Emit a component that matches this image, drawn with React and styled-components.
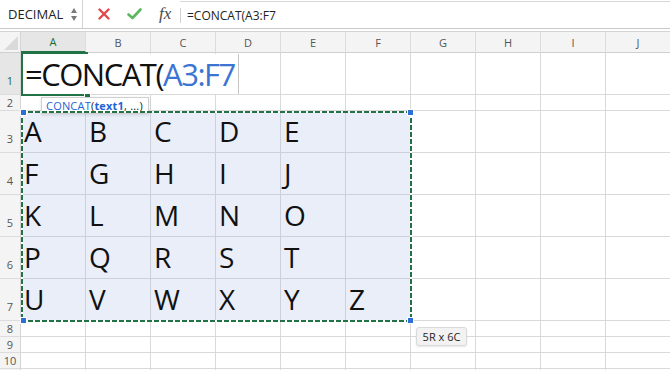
import React from "react";
import styled, { createGlobalStyle } from "styled-components";

const GlobalStyle = createGlobalStyle`
  html, body {
    margin: 0;
    padding: 0;
    background: #fff;
    overflow: hidden;
  }
  body {
    font-family: "Open Sans", "Noto Sans", sans-serif;
    color: #1d1d1d;
  }
`;

const COLS = ["A", "B", "C", "D", "E", "F", "G", "H", "I", "J"];
const ROWS = [
  { n: 1, h: 42 },
  { n: 2, h: 16 },
  { n: 3, h: 42 },
  { n: 4, h: 42 },
  { n: 5, h: 42 },
  { n: 6, h: 42 },
  { n: 7, h: 42 },
  { n: 8, h: 16 },
  { n: 9, h: 16 },
  { n: 10, h: 16 },
  { n: 11, h: 16, hidden: true },
];
const DATA = [
  ["A", "B", "C", "D", "E", ""],
  ["F", "G", "H", "I", "J", ""],
  ["K", "L", "M", "N", "O", ""],
  ["P", "Q", "R", "S", "T", ""],
  ["U", "V", "W", "X", "Y", "Z"],
];

const Page = styled.div`
  width: 670px;
  height: 370px;
  overflow: hidden;
`;

const FormulaBar = styled.div`
  display: flex;
  align-items: stretch;
  height: 28px;
  border-bottom: 1px solid #c9c9c9;
  box-shadow: 0 2px 0 #fff, 0 3px 0 #d4d4d4;
  margin-bottom: 3px;
`;

const NameBox = styled.div`
  width: 83px;
  display: flex;
  align-items: center;
  justify-content: space-between;
  padding: 0 5px 0 8px;
  box-sizing: border-box;
  border-right: 1px solid #d2d2d2;
  font-size: 13px;
  color: #222;
`;

const Spinner = styled.div`
  display: flex;
  flex-direction: column;
  gap: 3px;
  margin-top: 1px;
`;

const Arrow = styled.div`
  width: 0;
  height: 0;
  border-left: 3.5px solid transparent;
  border-right: 3.5px solid transparent;
  ${({ up }) =>
    up ? `border-bottom: 5px solid #7a7a7a;` : `border-top: 5px solid #7a7a7a;`}
`;

const Actions = styled.div`
  display: flex;
  align-items: center;
  width: 97px;
  padding-left: 15px;
  box-sizing: border-box;
  gap: 17px;
`;

const FxLabel = styled.span`
  font-family: "Liberation Serif", "DejaVu Serif", serif;
  font-style: italic;
  font-size: 17px;
  color: #4a4a4a;
`;

const FormulaInput = styled.div`
  flex: 1;
  display: flex;
  align-items: center;
  border-top: 1px solid #d6d6d6;
  margin-top: 1px;
  font-size: 12px;
  color: #222;
  &::before {
    content: "";
    width: 1px;
    height: 15px;
    background: #d0d0d0;
    margin-right: 6px;
  }
`;

const Sheet = styled.div`
  position: relative;
  display: grid;
  grid-template-columns: 21px repeat(10, 65px);
`;

const Corner = styled.div`
  height: 21px;
  box-sizing: border-box;
  background: #f4f4f4;
  border-right: 1px solid #d4d4d4;
  border-bottom: 1px solid #cfcfcf;
  position: relative;
  &::after {
    content: "";
    position: absolute;
    right: 2px;
    bottom: 2px;
    border-left: 14px solid transparent;
    border-bottom: 14px solid #dadada;
  }
`;

const ColHead = styled.div`
  height: 21px;
  box-sizing: border-box;
  display: flex;
  align-items: center;
  justify-content: center;
  font-size: 11px;
  background: ${({ active }) => (active ? "#e6e6e6" : "#f4f4f4")};
  color: ${({ active }) => (active ? "#1e6b3b" : "#555")};
  border-right: 1px solid #dcdcdc;
  border-bottom: ${({ active }) =>
    active ? "2px solid #217346" : "1px solid #cfcfcf"};
`;

const RowHead = styled.div`
  height: ${({ h }) => h}px;
  box-sizing: border-box;
  display: flex;
  align-items: flex-end;
  justify-content: center;
  padding-bottom: ${({ h }) => (h > 20 ? 7 : 1)}px;
  font-size: 11px;
  line-height: 13px;
  background: ${({ active }) => (active ? "#e6e6e6" : "#f4f4f4")};
  color: ${({ active }) => (active ? "#1e6b3b" : "#555")};
  border-right: 1px solid #d4d4d4;
  border-bottom: 1px solid #dcdcdc;
`;

const Cell = styled.div`
  height: ${({ h }) => h}px;
  box-sizing: border-box;
  display: flex;
  align-items: flex-end;
  padding: 0 0 5px 3px;
  font-size: 28px;
  line-height: 32px;
  color: #111;
  background: ${({ sel }) => (sel ? "#e9eef8" : "#fff")};
  border-right: 1px solid ${({ sel }) => (sel ? "#cbd0da" : "#d9d9d9")};
  border-bottom: 1px solid ${({ sel }) => (sel ? "#cbd0da" : "#d9d9d9")};
`;

const ActiveCell = styled.div`
  position: absolute;
  left: 21px;
  top: 20px;
  width: 67px;
  height: 44px;
  box-sizing: border-box;
  border: 2px solid #217346;
`;

const FillHandle = styled.div`
  position: absolute;
  left: 84px;
  top: 61px;
  width: 5px;
  height: 5px;
  background: #217346;
  border: 1px solid #fff;
`;

const Editor = styled.div`
  position: absolute;
  left: 23px;
  top: 22px;
  width: 216px;
  height: 40px;
  box-sizing: border-box;
  background: #fff;
  border-right: 1px solid #c4c4c4;
  padding: 0 0 0 2px;
  font-size: 31px;
  line-height: 41px;
  letter-spacing: -1.5px;
  white-space: nowrap;
  color: #111;
`;

const RefText = styled.span`
  color: #3c74d3;
`;

const HintBox = styled.div`
  position: absolute;
  left: 41px;
  top: 65px;
  height: 17px;
  box-sizing: border-box;
  padding: 0 5px 0 4px;
  background: #fff;
  border: 1px solid #cfcfcf;
  box-shadow: 0 1px 3px rgba(0, 0, 0, 0.12);
  font-size: 11px;
  line-height: 15px;
  letter-spacing: 0.2px;
  color: #222;
  white-space: nowrap;
`;

const HintLink = styled.span`
  color: #1f64d6;
  text-decoration: underline;
  font-weight: ${({ bold }) => (bold ? 700 : 400)};
`;

const dash = (dir) =>
  `repeating-linear-gradient(${dir}, #217346 0 5px, #fff 5px 7px)`;

const Marquee = styled.div`
  position: absolute;
  left: 21px;
  top: 79px;
  width: 391px;
  height: 211px;
  background: ${dash("90deg")} top left / 100% 2px no-repeat,
    ${dash("90deg")} bottom left / 100% 2px no-repeat,
    ${dash("180deg")} top left / 2px 100% no-repeat,
    ${dash("180deg")} top right / 2px 100% no-repeat;
`;

const Handle = styled.div`
  position: absolute;
  width: 5px;
  height: 5px;
  background: #2e6fd6;
  border: 0.5px solid #fff;
  ${({ x }) => (x === "l" ? "left: -1px;" : "right: -2px;")}
  ${({ y }) => (y === "t" ? "top: -2px;" : "bottom: -2px;")}
`;

const SizeTip = styled.div`
  position: absolute;
  left: 416px;
  top: 295px;
  width: 51px;
  height: 19px;
  box-sizing: border-box;
  display: flex;
  align-items: center;
  justify-content: center;
  background: #f2f2f2;
  border: 1px solid #dadada;
  border-radius: 3px;
  box-shadow: 0 1px 2px rgba(0, 0, 0, 0.1);
  font-size: 11px;
  color: #222;
`;

function CancelIcon() {
  return (
    <svg width="12" height="12" viewBox="0 0 12 12">
      <path d="M1.5 1.5 L10.5 10.5 M10.5 1.5 L1.5 10.5" stroke="#e1474e" strokeWidth="2.4" strokeLinecap="round" />
    </svg>
  );
}

function ConfirmIcon() {
  return (
    <svg width="15" height="12" viewBox="0 0 15 12">
      <path d="M1.5 6.5 L5.5 10 L13.5 1.5" stroke="#5cb85c" strokeWidth="2.6" fill="none" strokeLinecap="round" strokeLinejoin="round" />
    </svg>
  );
}

export default function App() {
  return (
    <Page>
      <GlobalStyle />
      <FormulaBar>
        <NameBox>
          <span>DECIMAL</span>
          <Spinner>
            <Arrow up />
            <Arrow />
          </Spinner>
        </NameBox>
        <Actions>
          <CancelIcon />
          <ConfirmIcon />
          <FxLabel>fx</FxLabel>
        </Actions>
        <FormulaInput>=CONCAT(A3:F7</FormulaInput>
      </FormulaBar>

      <Sheet>
        <Corner />
        {COLS.map((c) => (
          <ColHead key={c} active={c === "A"}>
            {c}
          </ColHead>
        ))}
        {ROWS.map(({ n, h, hidden }) => (
          <React.Fragment key={n}>
            <RowHead h={h} active={n === 1}>
              {hidden ? null : n}
            </RowHead>
            {COLS.map((c, ci) => {
              const inRange = n >= 3 && n <= 7 && ci <= 5;
              const value = inRange ? DATA[n - 3][ci] : "";
              return (
                <Cell key={c} h={h} sel={inRange}>
                  {value}
                </Cell>
              );
            })}
          </React.Fragment>
        ))}

        <ActiveCell />
        <Editor>
          =CONCAT(<RefText>A3:F7</RefText>
        </Editor>
        <FillHandle />
        <HintBox>
          <HintLink>CONCAT</HintLink>(<HintLink bold>text1</HintLink>, ...)
        </HintBox>
        <Marquee>
          <Handle x="l" y="t" />
          <Handle x="r" y="t" />
          <Handle x="l" y="b" />
          <Handle x="r" y="b" />
        </Marquee>
        <SizeTip>5R x 6C</SizeTip>
      </Sheet>
    </Page>
  );
}
